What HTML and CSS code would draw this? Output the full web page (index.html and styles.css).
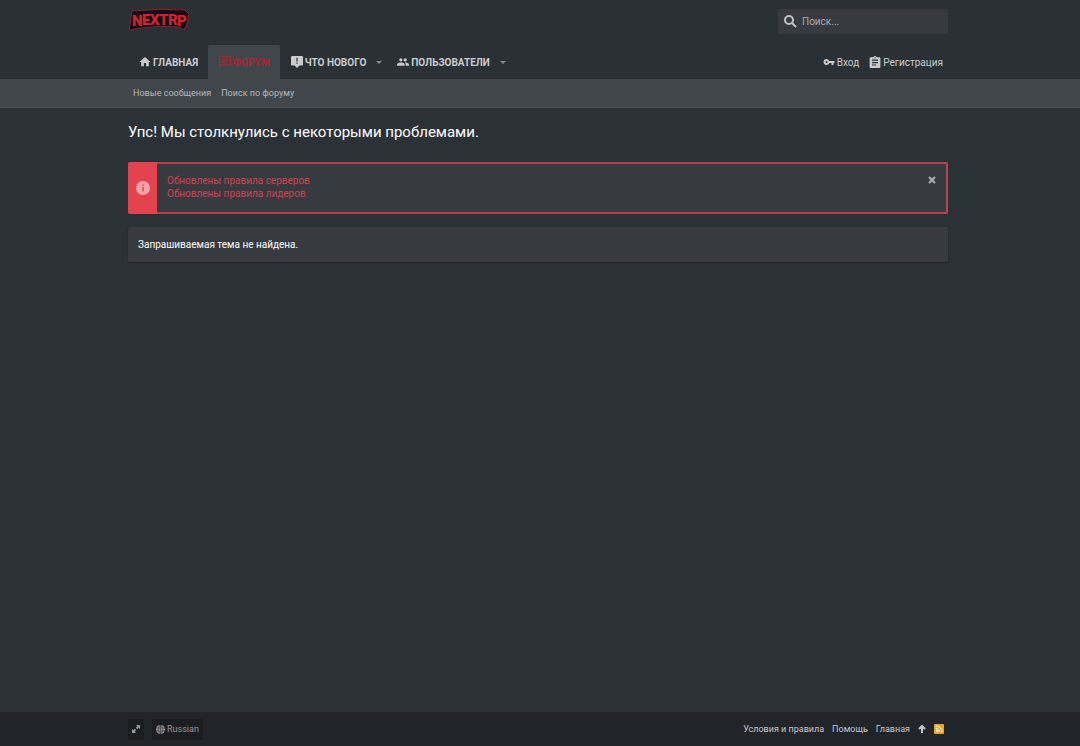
FILE: index.html
```
<!DOCTYPE html>
<html lang="ru">
<head>
	<meta charset="utf-8">
	<title>Упс! Мы столкнулись с некоторыми проблемами.</title>
	<meta name="viewport" content="width=device-width, initial-scale=1">
	<link rel="stylesheet" href="styles.css">
</head>
<body>

	<header class="header">
		<div class="inner header-top">
			<a href="#" class="logo" aria-label="NEXTRP">
				<svg width="62" height="24" viewBox="0 0 62 24">
					<path class="logo-edge" d="M4 3 Q31 0 57 2 L61 6 L59 16 L56 22 L51 19 Q28 17 1 22 L2 16 Z"/>
					<text class="logo-text"><tspan x="4" y="18">N</tspan><tspan x="14" y="17">E</tspan><tspan x="22" y="17">X</tspan><tspan x="31" y="17">T</tspan><tspan x="40" y="17">R</tspan><tspan x="49" y="18">P</tspan></text>
				</svg>
			</a>
			<form class="search">
				<svg class="icon-search" width="13" height="13" viewBox="0 0 13 13"><circle cx="5" cy="5" r="4"/><path d="M8 8l4 4"/></svg>
				<input type="text" placeholder="Поиск..." aria-label="Поиск">
			</form>
		</div>

		<nav class="inner nav">
			<a href="#" class="nav-link">
				<svg class="icon" width="12" height="12" viewBox="1 1 22 22"><path d="M10 20v-6h4v6h5v-8h3L12 3 2 12h3v8z"/></svg>
				<span>ГЛАВНАЯ</span>
			</a>
			<a href="#" class="nav-link active">
				<svg class="icon" width="12" height="12" viewBox="2 2 20 20"><path d="M20 2H4a2 2 0 0 0-2 2v18l4-4h14a2 2 0 0 0 2-2V4a2 2 0 0 0-2-2zm0 14H5l-1 1V4h16zM6 12h8v2H6zm0-3h12v2H6zm0-3h12v2H6z"/></svg>
				<span>ФОРУМ</span>
			</a>
			<a href="#" class="nav-link">
				<svg class="icon" width="12" height="12" viewBox="2 2 20 20"><path d="M20 2H4a2 2 0 0 0-2 2v12c0 1.100.9 2 2 2h4l4 4 4-4h4a2 2 0 0 0 2-2V4a2 2 0 0 0-2-2zm-7 13h-2v-2h2zm0-4h-2V5h2z"/></svg>
				<span>ЧТО НОВОГО</span>
			</a>
			<button type="button" class="nav-more" aria-label="Что нового: меню"></button>
			<a href="#" class="nav-link">
				<svg class="icon" width="12" height="12" viewBox="1 2 22 20"><path d="M16 11a3 3 0 1 0 0-6 3 3 0 0 0 0 6zm-8 0a3 3 0 1 0 0-6 3 3 0 0 0 0 6zm0 2c-2.300 0-7 1.200-7 3.500V19h14v-2.500C15 14.200 10.300 13 8 13zm8 0-1 .1c1.200.8 2 2 2 3.400V19h6v-2.500c0-2.300-4.700-3.500-7-3.500z"/></svg>
				<span>ПОЛЬЗОВАТЕЛИ</span>
			</a>
			<button type="button" class="nav-more" aria-label="Пользователи: меню"></button>

			<div class="account">
				<a href="#">
					<svg class="icon" width="12" height="12" viewBox="0 1 24 22"><path d="M12.650 10A6 6 0 1 0 12.650 14H17v4h4v-4h2v-4zM7 14a2 2 0 1 1 0-4 2 2 0 0 1 0 4z"/></svg>
					<span>Вход</span>
				</a>
				<a href="#">
					<svg class="icon" width="12" height="12" viewBox="2 1 20 20"><path d="M19 3h-4.200a3 3 0 0 0-5.600 0H5a2 2 0 0 0-2 2v14a2 2 0 0 0 2 2h14a2 2 0 0 0 2-2V5a2 2 0 0 0-2-2zm-7 0a1 1 0 1 1 0 2 1 1 0 0 1 0-2zm2 14H7v-2h7zm3-4H7v-2h10zm0-4H7V7h10z"/></svg>
					<span>Регистрация</span>
				</a>
			</div>
		</nav>
	</header>

	<div class="subnav">
		<div class="inner">
			<a href="#">Новые сообщения</a>
			<a href="#">Поиск по форуму</a>
		</div>
	</div>

	<main class="inner main">
		<h1>Упс! Мы столкнулись с некоторыми проблемами.</h1>

		<div class="notice">
			<div class="notice-side">
				<svg width="14" height="14" viewBox="0 0 14 14"><circle class="info-disc" cx="7" cy="7" r="7"/><path class="info-mark" d="M6.300 3.500h1.400v1.400H6.300zM6.300 6h1.400v4.500H6.300z"/></svg>
			</div>
			<div class="notice-text">
				<a href="#">Обновлены правила серверов</a>
				<a href="#">Обновлены правила лидеров</a>
			</div>
			<button type="button" class="notice-close" aria-label="Закрыть">
				<svg width="8" height="8" viewBox="0 0 8 8"><path d="M1 1l6 6M7 1L1 7"/></svg>
			</button>
		</div>

		<div class="message">Запрашиваемая тема не найдена.</div>
	</main>

	<footer class="footer">
		<div class="inner">
			<button type="button" class="chip" aria-label="Ширина страницы">
				<svg class="icon" width="8" height="8" viewBox="0 0 8 8"><path d="M4 0h4v4L6.700 2.700 5.200 4.200 3.800 2.800 5.300 1.300zM0 4l1.300 1.300 1.500-1.500 1.400 1.400-1.500 1.500L4 8H0z"/></svg>
			</button>
			<button type="button" class="chip">
				<svg width="9" height="9" viewBox="0 0 18 18"><circle class="globe" cx="9" cy="9" r="9"/><path class="globe-lines" d="M0 6h18M0 12h18M9 0v18M9 0C3 5 3 13 9 18M9 0c6 5 6 13 0 18"/></svg>
				<span>Russian</span>
			</button>
			<div class="footer-links">
				<a href="#">Условия и правила</a>
				<a href="#">Помощь</a>
				<a href="#">Главная</a>
				<a href="#" aria-label="Наверх"><svg class="icon-up" width="8" height="8" viewBox="0 0 8 8"><path d="M4 8V1M1 4l3-3 3 3"/></svg></a>
				<a href="#" class="rss" aria-label="RSS"><svg width="8" height="8" viewBox="0 0 8 8"><circle cx="2" cy="6" r="1"/><path d="M1 3.500a3.500 3.500 0 0 1 3.500 3.500M1 1a6 6 0 0 1 6 6"/></svg></a>
			</div>
		</div>
	</footer>

</body>
</html>
```
FILE: styles.css
```
*{
	box-sizing: border-box;
}

body{
	margin: 0;
	min-height: 100vh;
	display: flex;
	flex-direction: column;
	background: #2b3237;
	color: #fff;
	font-family: Roboto, "Liberation Sans", sans-serif;
	font-size: 10px;
	line-height: 13px;
}

a{
	color: inherit;
	text-decoration: none;
}

button{
	border: 0;
	padding: 0;
	background: none;
	color: inherit;
	font: inherit;
}

svg{
	display: block;
	flex: none;
}

.icon{
	fill: currentColor;
}

.inner{
	margin: 0 132px 0 128px;
}

/* header */
.header{
	background: #2a3136;
}

.header-top{
	display: flex;
	justify-content: space-between;
	align-items: center;
	height: 45px;
}

.logo{
	margin-bottom: 6px;
}

.logo-edge{
	fill: #160c18;
	stroke: #8f1f29;
	stroke-width: 1;
}

.logo-text{
	font-family: Roboto, sans-serif;
	font-size: 15px;
	font-weight: 900;
	fill: #cf2430;
}

.search{
	display: flex;
	align-items: center;
	width: 170px;
	height: 25px;
	padding: 0 6px;
	gap: 5px;
	margin-bottom: 2px;
	background: #373a41;
	border-radius: 2px;
}

.icon-search{
	fill: none;
	stroke: #c0c2c4;
	stroke-width: 2;
}

.search input{
	flex: 1;
	min-width: 0;
	border: 0;
	padding: 0;
	background: none;
	color: #fff;
	font: inherit;
}

.search input::placeholder{
	color: #a9abae;
}

.nav{
	display: flex;
	height: 34px;
	color: #c9cbcc;
}

.nav-link{
	display: flex;
	align-items: center;
	gap: 2px;
	padding: 0 10px 0 11px;
	font-weight: 700;
}

.nav-link.active{
	background: #40474c;
	color: #a8262c;
	border-radius: 2px 2px 0 0;
}

.nav-more{
	width: 10px;
	display: flex;
	align-items: center;
}

.nav-more::before{
	content: "";
	border: 3px solid transparent;
	border-top-color: #85898c;
	border-bottom: 0;
}

.account{
	display: flex;
	align-items: center;
	gap: 10px;
	margin-left: auto;
	padding-right: 5px;
}

.account a{
	display: flex;
	align-items: center;
	gap: 2px;
}

.subnav{
	background: #40474c;
	border-bottom: 1px solid #4b5257;
	color: #b5b8ba;
	font-size: 9px;
}

.subnav .inner{
	display: flex;
	align-items: center;
	gap: 10px;
	height: 28px;
	padding-left: 5px;
}

/* content */
.main{
	flex: 1;
}

h1{
	margin: 14px 0 19px;
	font-size: 15px;
	line-height: 21px;
	font-weight: 400;
}

.notice{
	display: flex;
	height: 52px;
	margin-bottom: 13px;
	background: #373a41;
	border: 2px solid #b6434e;
	border-left: 0;
	border-radius: 2px;
}

.notice-side{
	display: flex;
	align-items: center;
	justify-content: center;
	width: 29px;
	margin: -2px 0;
	background: #e2434d;
	border-radius: 2px 0 0 2px;
}

.info-disc{
	fill: #f5a3a8;
}

.info-mark{
	fill: #e2434d;
}

.notice-text{
	display: flex;
	flex-direction: column;
	flex: 1;
	padding: 10px;
	color: #d0424c;
}

.notice-close{
	align-self: flex-start;
	padding: 12px 10px;
}

.notice-close path{
	stroke: #b0b2b5;
	stroke-width: 2;
}

.message{
	padding: 11px 10px;
	background: #373a41;
	border-radius: 2px;
	box-shadow: 0 1px 2px rgba(0,0,0,0.3);
}

/* footer */
.footer{
	background: #212428;
	color: #c5c6c7;
	font-size: 9px;
}

.footer .inner{
	display: flex;
	align-items: center;
	gap: 8px;
	height: 34px;
}

.chip{
	display: flex;
	align-items: center;
	justify-content: center;
	gap: 2px;
	height: 21px;
	padding: 0 4px;
	background: #1b1d20;
	border-radius: 2px;
	color: #96989a;
}

.globe{
	fill: #96989a;
}

.globe-lines{
	fill: none;
	stroke: #1b1d20;
	stroke-width: 1;
}

.footer-links{
	display: flex;
	align-items: center;
	gap: 8px;
	margin-left: auto;
	padding-right: 4px;
}

.icon-up{
	fill: none;
	stroke: currentColor;
	stroke-width: 2;
}

.rss{
	padding: 1px;
	background: #eda62c;
	border-radius: 1px;
}

.rss circle{
	fill: #fff;
}

.rss path{
	fill: none;
	stroke: #fff;
	stroke-width: 1;
}
```
